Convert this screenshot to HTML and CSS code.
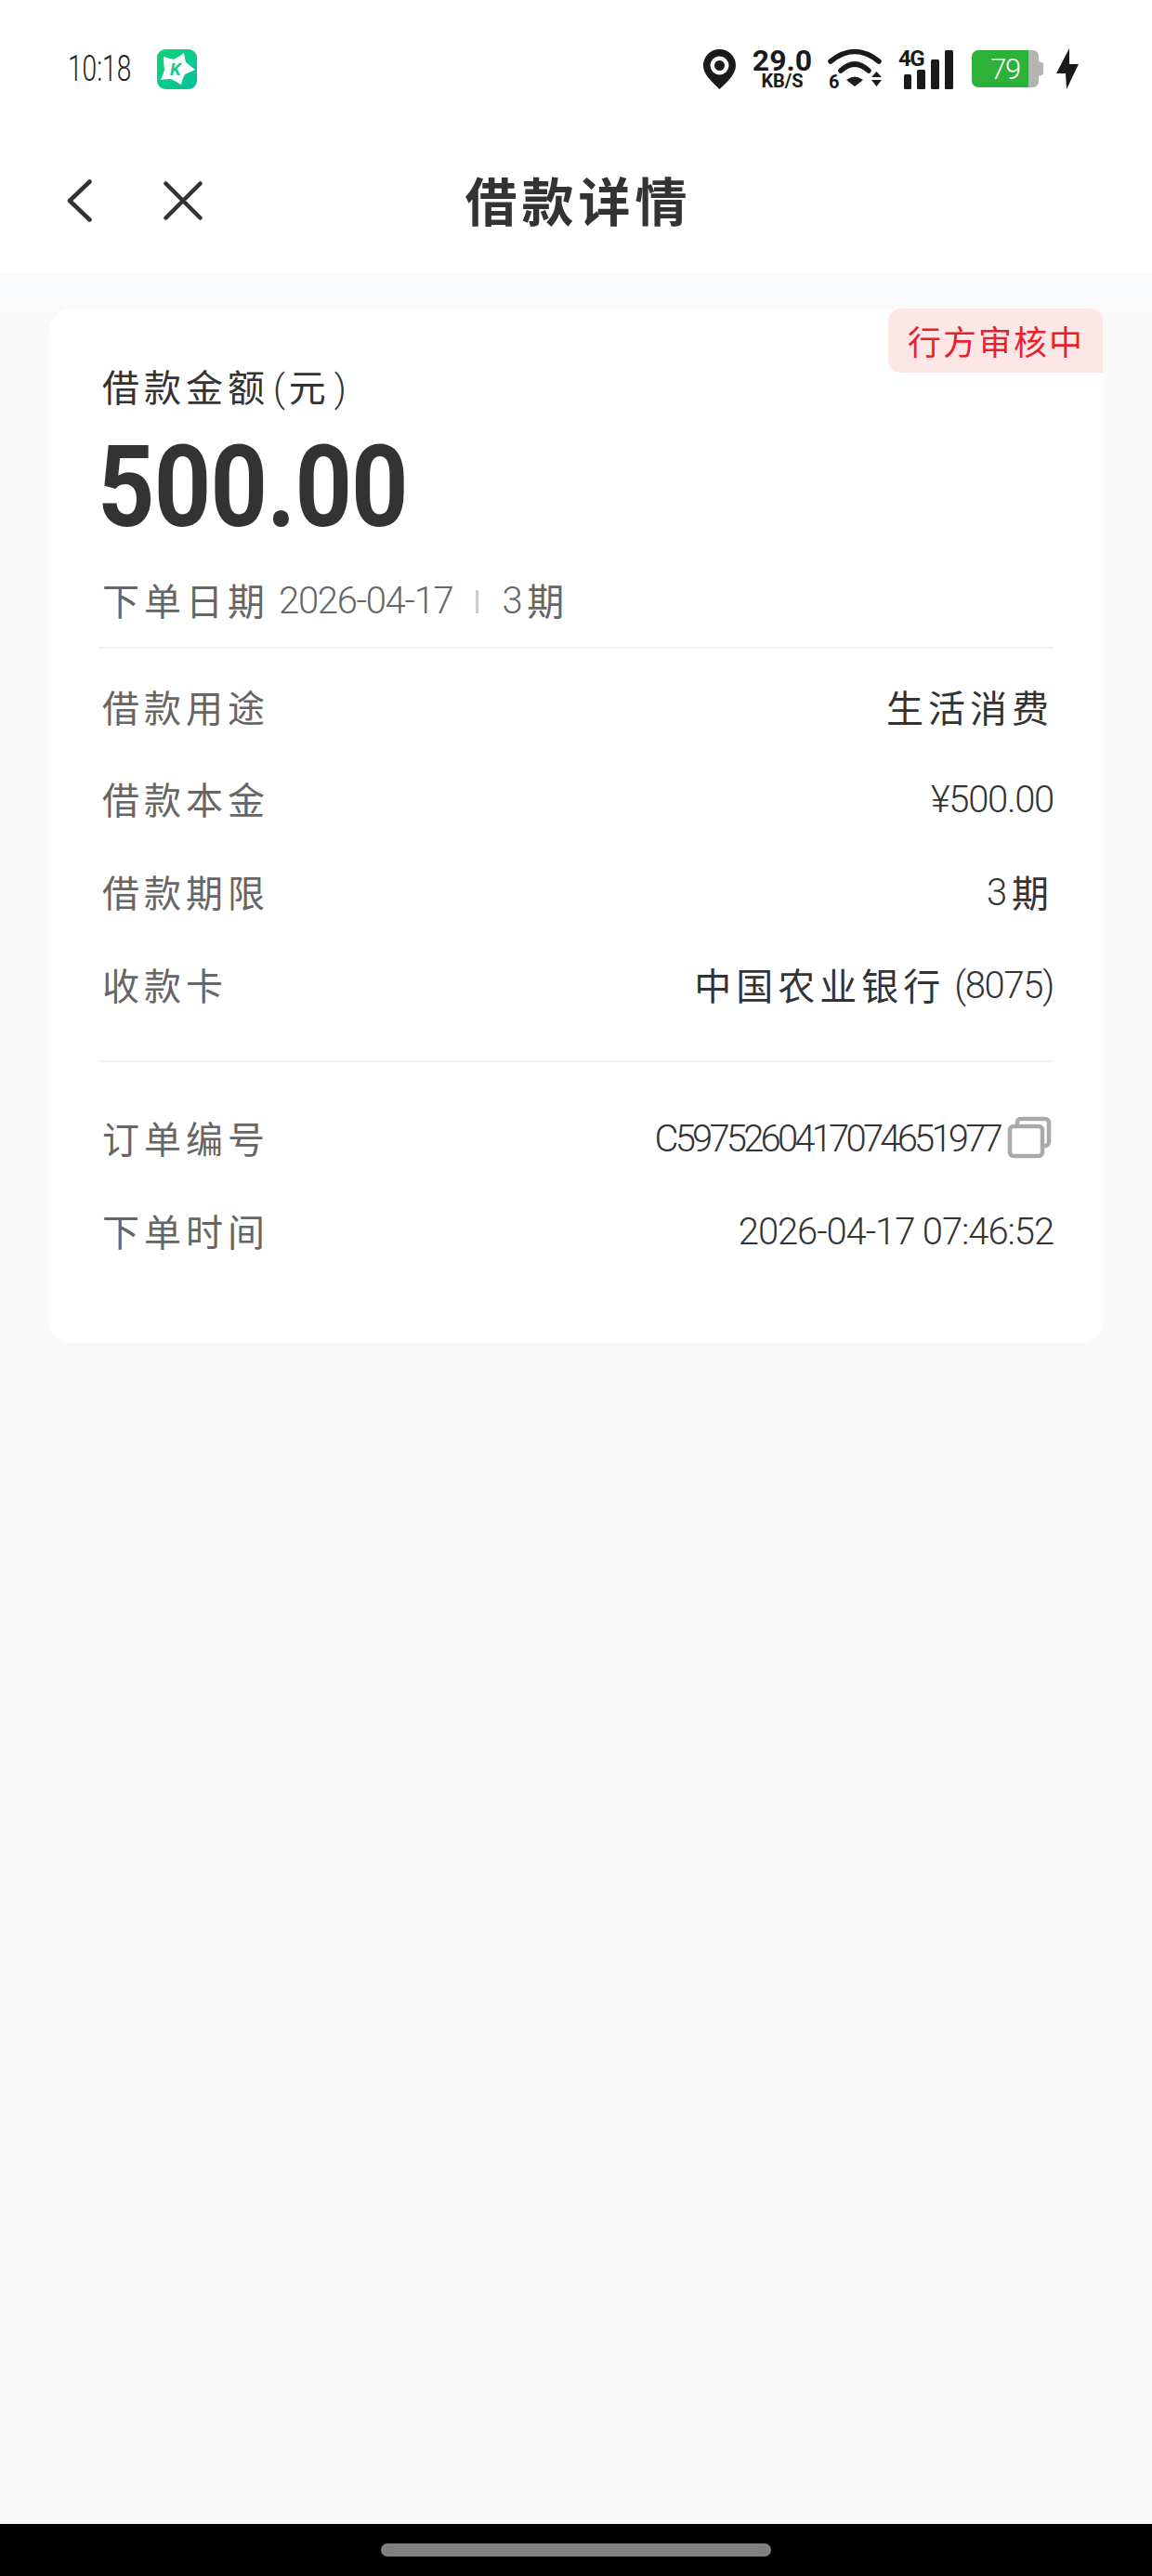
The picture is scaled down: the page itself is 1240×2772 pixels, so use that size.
FILE: index.html
```html
<!DOCTYPE html>
<html lang="zh-CN">
<head>
<meta charset="utf-8">
<title>借款详情</title>
<link rel="stylesheet" href="styles.css">
</head>
<body>
<div class="screen">
  <header class="header">
    <div class="status">
      <div class="status-left">
        <span class="time">10:18</span>
        <svg class="app-logo" viewBox="0 0 43 43" aria-hidden="true">
          <defs><linearGradient id="lg" x1="0" y1="0" x2="1" y2="1"><stop offset="0" stop-color="#13d07a"/><stop offset="1" stop-color="#05c39a"/></linearGradient></defs>
          <rect width="43" height="43" rx="9" fill="url(#lg)"/>
          <path d="M7 8 Q14 10 18 11 Q24 8 29 4 Q30 10 31 14 Q36 18 41 22 Q35 25 30 27 Q27 32 26 38 Q21 35 15 32 Q10 32 4 33 Q7 27 8 22 Q7 15 7 8Z" fill="#fff"/>
          <text class="logo-k" x="14" y="28">K</text>
        </svg>
      </div>
      <div class="status-right">
        <svg class="i-pin" viewBox="0 0 35 43" aria-hidden="true">
          <path d="M17.5 0C7.8 0 0 7.6 0 17.2 0 27 9 35 17.5 43 26 35 35 27 35 17.2 35 7.6 27.2 0 17.5 0Z" fill="#1a1a1a"/>
          <circle cx="17.5" cy="17.5" r="10" fill="#fff"/>
          <circle cx="17.5" cy="17.5" r="5.5" fill="#1a1a1a"/>
        </svg>
        <div class="speed"><span class="speed-num">29.0</span><span class="speed-unit">KB/S</span></div>
        <svg class="i-wifi" viewBox="0 0 60 44" aria-hidden="true">
          <path d="M4 14Q30 -7 56 14" fill="none" stroke="#1a1a1a" stroke-width="5.5" stroke-linecap="round"/>
          <path d="M15 24Q30 10 45 24" fill="none" stroke="#1a1a1a" stroke-width="5.5" stroke-linecap="round"/>
          <path d="M21 34Q30 27 39 34L30 41Z" fill="#1a1a1a"/>
          <path d="M48 31L53.500 25 59 31ZM48 34H59L53.500 41Z" fill="#1a1a1a"/>
          <text class="wifi-six" x="2" y="43">6</text>
        </svg>
        <div class="signal">
          <span class="signal-tag">4G</span>
          <svg class="i-bars" viewBox="0 0 53 42" aria-hidden="true">
            <rect x="0" y="26" width="8" height="16" rx="1.500" fill="#1a1a1a"/>
            <rect x="14" y="21" width="9" height="21" rx="1.500" fill="#1a1a1a"/>
            <rect x="29" y="10" width="9" height="32" rx="1.500" fill="#1a1a1a"/>
            <rect x="44" y="0" width="9" height="42" rx="1.500" fill="#1a1a1a"/>
          </svg>
        </div>
        <svg class="i-batt" viewBox="0 0 77 40" aria-hidden="true">
          <path d="M7 0H61V40H7A7 7 0 0 1 0 33V7A7 7 0 0 1 7 0Z" fill="#2db138"/>
          <path d="M61 0H66A6 6 0 0 1 72 6V12L77 14V26L72 28V34A6 6 0 0 1 66 40H61Z" fill="#b4b4b4"/>
          <text class="batt-text" x="36" y="31" text-anchor="middle">79</text>
        </svg>
        <svg class="i-bolt" viewBox="0 0 24 44" aria-hidden="true">
          <path d="M14 0L0 27H10L11 44 24 17H14Z" fill="#1a1a1a"/>
        </svg>
      </div>
    </div>
    <nav class="nav">
      <div class="nav-icons">
        <svg class="i-back" viewBox="0 0 27 46" aria-hidden="true"><path d="M24.500 2.500L3 23 24.500 43.500" fill="none" stroke="#333" stroke-width="4.500" stroke-linecap="round" stroke-linejoin="round"/></svg>
        <svg class="i-close" viewBox="0 0 42 42" aria-hidden="true"><path d="M2.500 2.500L39.500 39.500M39.500 2.500L2.500 39.500" fill="none" stroke="#333" stroke-width="4.500" stroke-linecap="round"/></svg>
      </div>
      <h1 class="nav-title">借款详情</h1>
      <div></div>
    </nav>
  </header>

  <main class="main">
    <section class="card">
      <div class="badge">行方审核中</div>
      <div class="summary">
        <div class="summary-label"><span class="cn">借款金额</span><span class="paren">(</span><span class="cn">元</span><span class="paren">)</span></div>
        <div class="amount">500.00</div>
        <div class="summary-sub"><span class="cn">下单日期</span><span class="num">2026-04-17</span><i class="sep"></i><span class="num">3</span><span class="cn">期</span></div>
      </div>
      <div class="group group-first">
        <div class="row"><span class="row-label cn">借款用途</span><span class="row-value"><span class="cn">生活消费</span></span></div>
        <div class="row"><span class="row-label cn">借款本金</span><span class="row-value"><span class="num">¥500.00</span></span></div>
        <div class="row"><span class="row-label cn">借款期限</span><span class="row-value"><span class="num">3</span><span class="cn">期</span></span></div>
        <div class="row"><span class="row-label cn">收款卡</span><span class="row-value"><span class="cn">中国农业银行</span><span class="num">(8075)</span></span></div>
      </div>
      <div class="group group-last">
        <div class="row"><span class="row-label cn">订单编号</span><span class="row-value"><span class="num num-order">C5975260417074651977</span>
          <svg class="i-copy" viewBox="0 0 48 46" aria-hidden="true">
            <path d="M11 9V6A4 4 0 0 1 15 3H41A4 4 0 0 1 45 7V28A4 4 0 0 1 41 32H38" fill="none" stroke="#aaa" stroke-width="4.500"/>
            <rect x="3" y="11" width="35" height="32" rx="4" fill="none" stroke="#aaa" stroke-width="4.500"/>
          </svg></span></div>
        <div class="row"><span class="row-label cn">下单时间</span><span class="row-value"><span class="num num-date">2026-04-17 07:46:52</span></span></div>
      </div>
    </section>
  </main>

  <footer class="gesture"><span class="pill"></span></footer>
</div>
</body>
</html>
```
FILE: styles.css
```css
* { box-sizing: border-box; }
html, body { margin: 0; padding: 0; }
body {
  width: 1240px;
  height: 2772px;
  background: #f9f9f9;
  font-family: "Noto Sans CJK SC", "Noto Sans", sans-serif;
  color: #333;
  overflow: hidden;
}
.screen { display: flex; flex-direction: column; height: 2772px; }

.header { background: #fff; padding-bottom: 9px; }
.status {
  height: 148px;
  padding: 0 79px 0 73px;
  display: flex;
  align-items: center;
  justify-content: space-between;
}
.status-left { display: flex; align-items: center; gap: 29px; }
.time {
  display: block;
  width: 67px;
  font: 300 38px/1 Roboto, sans-serif;
  color: #222;
  white-space: nowrap;
  transform: scaleX(.74);
  transform-origin: left center;
}
.app-logo { width: 43px; height: 43px; display: block; }
.logo-k { font: italic 700 19px Roboto, sans-serif; fill: #12c98a; }
.status-right { display: flex; align-items: center; }
.i-pin { width: 35px; height: 43px; display: block; }
.speed { margin-left: 16px; width: 68px; display: flex; flex-direction: column; align-items: center; }
.speed-num { font: 700 32px/24px Roboto, sans-serif; color: #1a1a1a; }
.speed-unit { margin-top: 2px; font: 700 20px/17px Roboto, sans-serif; color: #1a1a1a; }
.i-wifi { margin-left: 14px; width: 60px; height: 44px; display: block; overflow: visible; }
.wifi-six { font: 700 20px Roboto, sans-serif; fill: #1a1a1a; }
.signal { margin-left: 17px; width: 59px; height: 43px; position: relative; display: flex; justify-content: flex-end; align-items: flex-end; }
.signal-tag { position: absolute; left: 0; top: 0; font: 700 24px/20px Roboto, sans-serif; letter-spacing: -1.5px; color: #1a1a1a; }
.i-bars { width: 53px; height: 42px; display: block; }
.i-batt { margin-left: 20px; width: 77px; height: 40px; display: block; }
.batt-text { font: 300 31px Roboto, sans-serif; letter-spacing: -1.5px; fill: #fff; }
.i-bolt { margin-left: 14px; width: 24px; height: 44px; display: block; }

.nav {
  height: 136px;
  padding: 0 72px;
  display: grid;
  grid-template-columns: 1fr auto 1fr;
  align-items: center;
}
.nav-icons { display: flex; align-items: center; gap: 77px; }
.i-back { width: 27px; height: 46px; display: block; }
.i-close { width: 42px; height: 42px; display: block; }
.nav-title { margin: 0 0 5px 5px; font-size: 56px; line-height: 70px; font-weight: 700; letter-spacing: 5px; color: #333; }

.main {
  flex: 1;
  padding: 39px 53px 0;
  background: linear-gradient(#f9fafc 0, #f9fafc 39px, #f9f9f9 39px);
}
.card {
  position: relative;
  height: 1113px;
  padding: 0 53px;
  background: #fff;
  border-radius: 24px;
}
.badge {
  position: absolute;
  top: 0;
  right: 0;
  width: 231px;
  height: 69px;
  padding-left: 21px;
  background: #fde6e6;
  border-radius: 14px 14px 0 14px;
  color: #e8222a;
  font-size: 36px;
  line-height: 69px;
  letter-spacing: 2px;
  white-space: nowrap;
}
.cn { letter-spacing: 5px; }
.num, .paren { font-family: Roboto, sans-serif; }
.num { padding-top: 4px; font-size: 40px; font-weight: 300; letter-spacing: -1.3px; }
.num-order { letter-spacing: -3.8px; }
.num-date { letter-spacing: -1.1px; }
.cn + .num { margin-left: 10px; }
.num + .cn { margin-left: 6px; }

.summary { padding: 60px 0 26px 4px; border-bottom: 2px solid #f2f2f2; }
.summary-label { font-size: 40px; line-height: 46px; color: #333; }
.paren { font-size: 40px; font-weight: 300; padding: 0 4px; }
.amount {
  margin: 33px 0 0 -5px;
  font: 700 122px/100px Roboto, sans-serif;
  color: #333;
  letter-spacing: -1px;
  transform: scaleX(.88);
  transform-origin: left center;
}
.summary-sub {
  margin-top: 45px;
  display: flex;
  align-items: center;
  font-size: 40px;
  line-height: 46px;
  color: #666;
}
.sep { width: 3px; height: 25px; margin: 4px 25px 0 25px; background: #ccc; }

.group { padding: 0 0 0 4px; }
.group-first { padding-top: 12px; padding-bottom: 33px; border-bottom: 2px solid #f2f2f2; }
.group-last { padding-top: 31px; }
.row { height: 99.6px; display: flex; align-items: center; justify-content: space-between; }
.row-label { font-size: 40px; line-height: 46px; color: #666; }
.row-value { display: flex; align-items: center; font-size: 40px; line-height: 46px; color: #333; white-space: nowrap; }
.i-copy { width: 48px; height: 46px; margin: 0 2px 0 8px; display: block; }

.gesture {
  height: 56px;
  display: flex;
  align-items: center;
  justify-content: center;
  background: #000;
}
.pill { width: 420px; height: 14px; border-radius: 7px; background: #808080; }
```
